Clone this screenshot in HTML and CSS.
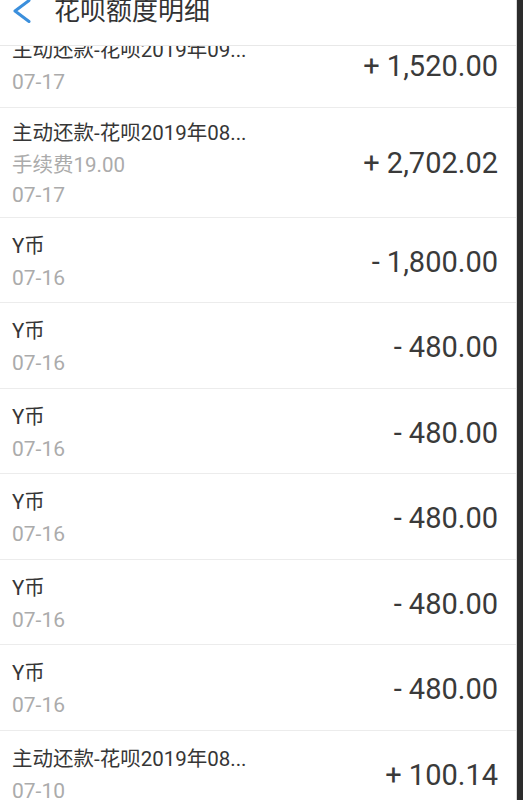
FILE: index.html
```html
<!DOCTYPE html>
<html lang="zh">
<head>
<meta charset="utf-8">
<title>花呗额度明细</title>
<link rel="stylesheet" href="styles.css">
</head>
<body>
<div class="screen">
  <header class="header">
    <svg class="back" width="20" height="26" viewBox="0 0 20 26" aria-hidden="true">
      <polyline points="17,2.5 3,13 17,23.5" fill="none" stroke="#3b8fdc" stroke-width="3" stroke-linecap="round" stroke-linejoin="round"/>
    </svg>
    <h1 class="title">花呗额度明细</h1>
  </header>
  <div class="list">
    <div class="row">
      <div class="info"><div class="name">主动还款-花呗2019年09...</div><div class="date">07-17</div></div>
      <div class="amount">+ 1,520.00</div>
    </div>
    <div class="row row-tall">
      <div class="info"><div class="name">主动还款-花呗2019年08...</div><div class="fee">手续费19.00</div><div class="date">07-17</div></div>
      <div class="amount">+ 2,702.02</div>
    </div>
    <div class="row">
      <div class="info"><div class="name">Y币</div><div class="date">07-16</div></div>
      <div class="amount">- 1,800.00</div>
    </div>
    <div class="row">
      <div class="info"><div class="name">Y币</div><div class="date">07-16</div></div>
      <div class="amount">- 480.00</div>
    </div>
    <div class="row">
      <div class="info"><div class="name">Y币</div><div class="date">07-16</div></div>
      <div class="amount">- 480.00</div>
    </div>
    <div class="row">
      <div class="info"><div class="name">Y币</div><div class="date">07-16</div></div>
      <div class="amount">- 480.00</div>
    </div>
    <div class="row">
      <div class="info"><div class="name">Y币</div><div class="date">07-16</div></div>
      <div class="amount">- 480.00</div>
    </div>
    <div class="row">
      <div class="info"><div class="name">Y币</div><div class="date">07-16</div></div>
      <div class="amount">- 480.00</div>
    </div>
    <div class="row">
      <div class="info"><div class="name">主动还款-花呗2019年08...</div><div class="date">07-10</div></div>
      <div class="amount">+ 100.14</div>
    </div>
  </div>
</div>
<div class="strip"></div>
</body>
</html>
```
FILE: styles.css
```css
html, body {
  margin: 0;
  padding: 0;
  height: 800px;
  overflow: hidden;
  background: #ffffff;
}
body {
  display: flex;
  font-family: Roboto, "Noto Sans CJK SC", sans-serif;
  color: #333333;
}
.screen {
  flex: 1;
  position: relative;
  overflow: hidden;
  background: #ffffff;
}
.strip {
  width: 6px;
  background: #2c2c2c;
  border-left: 1px solid #d8d8d8;
}
.header {
  position: absolute;
  top: 0;
  left: 0;
  right: 0;
  height: 45px;
  background: #ffffff;
  border-bottom: 1px solid #e8e8e8;
  display: flex;
  align-items: flex-start;
  z-index: 1;
}
.back {
  margin-left: 12px;
  margin-top: -2px;
  flex: none;
}
.title {
  margin: -4px 0 0 22px;
  font-family: "Noto Sans CJK SC", sans-serif;
  font-size: 26px;
  line-height: 26px;
  font-weight: 400;
  color: #333333;
}
.list {
  padding-top: 22px;
}
.row {
  display: flex;
  align-items: center;
  justify-content: space-between;
  padding: 12px 18px 8.5px 12px;
  border-bottom: 1px solid #ececec;
}
.row-tall {
  padding-top: 9px;
  padding-bottom: 8px;
}
.info {
  display: flex;
  flex-direction: column;
}
.name {
  font-size: 20.5px;
  line-height: 32px;
  color: #363636;
}
.fee {
  font-size: 20.5px;
  line-height: 32px;
  color: #ababab;
}
.date {
  font-size: 21px;
  line-height: 32px;
  color: #ababab;
}
.row-tall .date {
  line-height: 28px;
}
.amount {
  font-size: 29px;
  line-height: 36px;
  color: #3a3a3a;
}
```
